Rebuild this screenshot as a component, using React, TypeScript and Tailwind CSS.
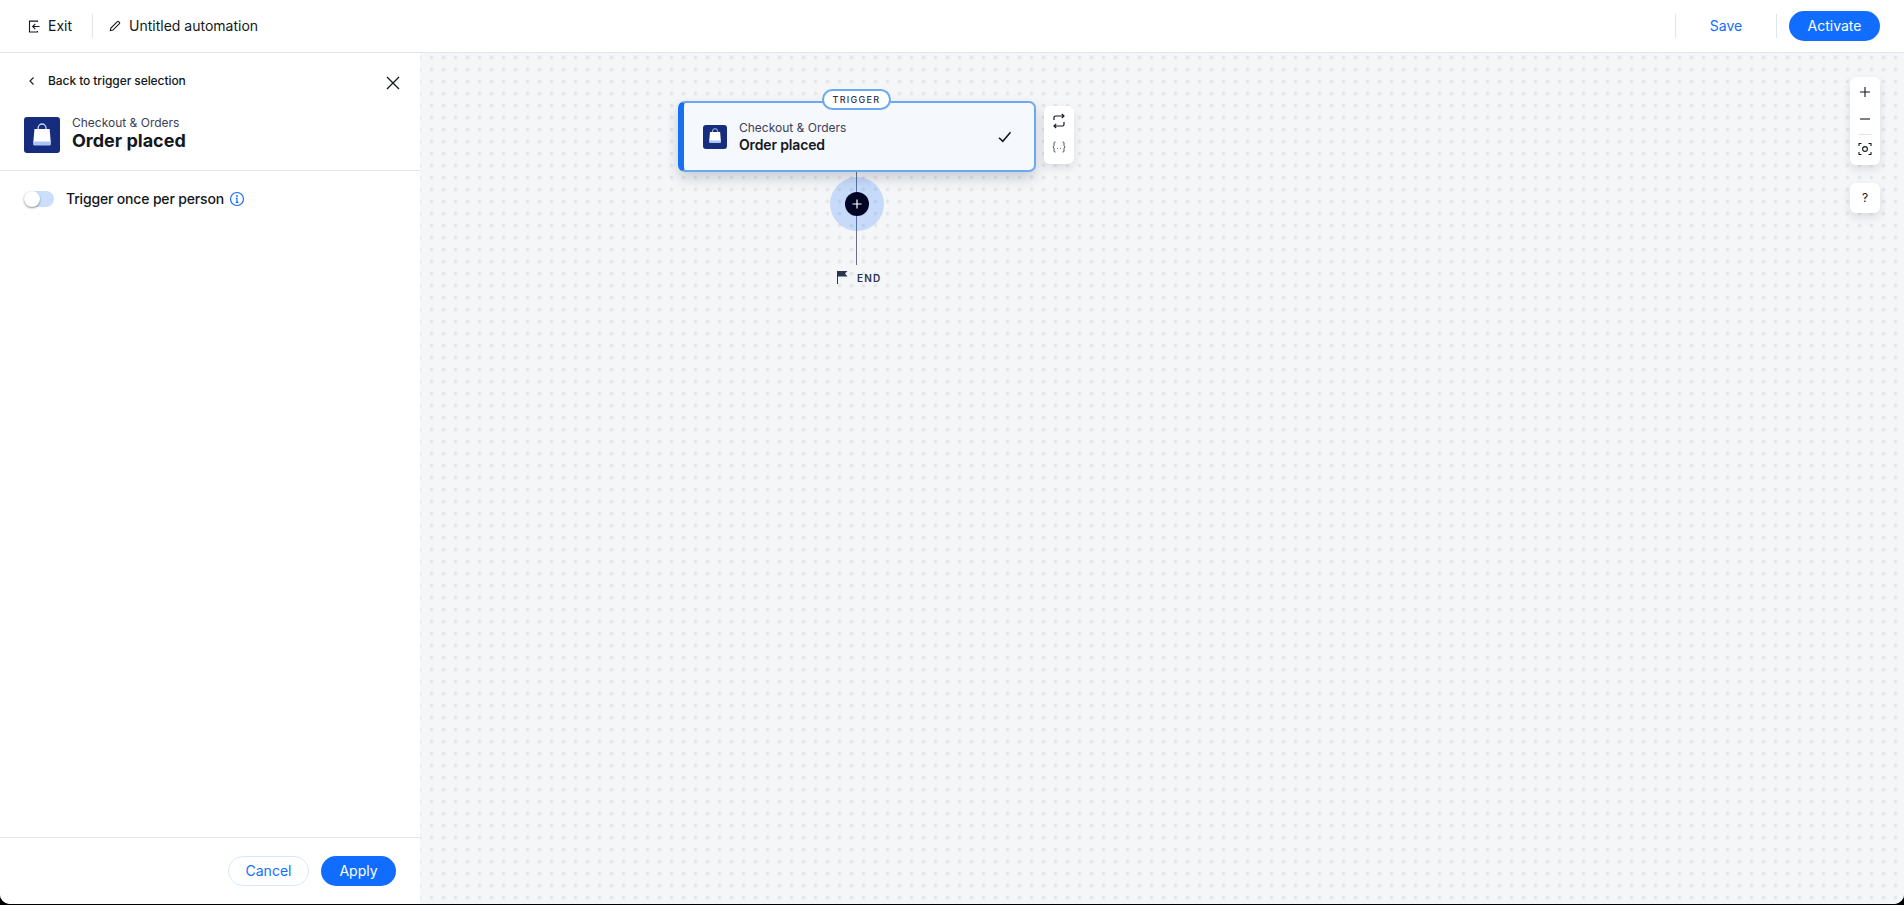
import React from "react";

const Bag = ({ size }: { size: number }) => (
  <div className="flex items-center justify-center rounded-[3px] bg-[#162d7d]" style={{ width: size, height: size }}>
    <svg width={size * 0.67} height={size * 0.67} viewBox="0 0 20 20">
      <path d="M6.800 6V4a3.200 3.200 0 0 1 6.400 0V6" fill="none" stroke="#c3d6fa" strokeWidth="1.100" />
      <path d="M3.700 5h12.600l1 11.500H2.700z" fill="#ffffff" />
      <path d="M2.800 15.400h14.400l.2 2.100a1 1 0 0 1-1 1.100H3.600a1 1 0 0 1-1-1.100z" fill="#a9c4f5" />
    </svg>
  </div>
);

const Stroke = ({ size = 18, children, className = "" }: { size?: number; children: React.ReactNode; className?: string }) => (
  <svg width={size} height={size} viewBox="0 0 18 18" fill="none" stroke="currentColor" strokeWidth="1.100" className={className}>
    {children}
  </svg>
);

function Header() {
  return (
    <header className="flex h-[53px] shrink-0 items-center border-b border-[#dfe5eb] bg-white pl-[27px] pr-6 text-[#131720]">
      <Stroke size={15}>
        <path d="M12.500 3.500V2.500H3v13h9.500v-1" strokeWidth="1.300" />
        <path d="M15 9H7M10 5.800 6.800 9l3.200 3.200" strokeWidth="1.300" />
      </Stroke>
      <span className="ml-[6px] text-[14px] leading-none">Exit</span>
      <div className="ml-[20px] h-6 w-px bg-[#dfe5eb]" />
      <Stroke size={14} className="ml-[15px]">
        <path d="M3 15l.7-3.400L12 3.300a1.200 1.200 0 0 1 1.700 0l1 1a1.200 1.200 0 0 1 0 1.700l-8.300 8.300z" strokeWidth="1.400" />
      </Stroke>
      <span className="ml-[7px] text-[14px] leading-none">Untitled automation</span>
      <div className="ml-auto h-6 w-px bg-[#dfe5eb]" />
      <button className="w-[100px] text-center text-[14px] leading-none text-[#116dff]">Save</button>
      <div className="h-6 w-px bg-[#dfe5eb]" />
      <button className="ml-3 h-[30px] w-[91px] rounded-full bg-[#116dff] text-[14px] leading-none text-white">Activate</button>
    </header>
  );
}

function Panel() {
  return (
    <aside className="flex w-[420px] shrink-0 flex-col bg-white text-[#131720]">
      <div className="h-[118px] shrink-0 border-b border-[#dfe5eb] pl-6 pr-[18px]">
        <div className="flex items-start justify-between pt-5">
          <div className="flex h-4 items-center">
            <svg width="8" height="10" viewBox="0 0 8 10" fill="none" stroke="currentColor" strokeWidth="1.100" className="ml-[4px]">
              <path d="M5.500 1.500 2 5l3.500 3.500" />
            </svg>
            <span className="ml-[12px] text-[12px] font-medium leading-4 tracking-[-0.08px]">Back to trigger selection</span>
          </div>
          <svg width="18" height="18" viewBox="0 0 18 18" stroke="currentColor" strokeWidth="1.300" className="mt-px">
            <path d="M3 3l12 12M15 3L3 15" />
          </svg>
        </div>
        <div className="mt-[23px] flex items-center gap-3">
          <Bag size={36} />
          <div className="flex flex-col pb-[3px]">
            <span className="text-[12px] leading-[15px] text-[#3b4057]">Checkout &amp; Orders</span>
            <span className="text-[18px] font-bold leading-[22px] text-[#131720]">Order placed</span>
          </div>
        </div>
      </div>
      <div className="flex items-center pl-6 pt-[18px]">
        <div className="relative h-4 w-[30px] rounded-full bg-[#cbdffc]">
          <div className="absolute left-0 top-0 h-4 w-4 rounded-full bg-white shadow-[0_1px_2px_rgba(0,0,0,0.45)]" />
        </div>
        <span className="ml-3 text-[14px] font-medium leading-5 tracking-[-0.17px]">Trigger once per person</span>
        <svg width="16" height="16" viewBox="0 0 16 16" fill="none" stroke="#116dff" className="ml-[5px]">
          <circle cx="8" cy="8" r="6.500" strokeWidth="1.200" />
          <path d="M6.800 7.300H8v4M6.800 11.300h2.600" strokeWidth="1.200" />
          <circle cx="8" cy="5" r=".9" fill="#116dff" stroke="none" />
        </svg>
      </div>
      <div className="mt-auto flex h-[67px] shrink-0 items-center justify-end gap-3 border-t border-[#dfe5eb] pr-6">
        <button className="h-[30px] w-[81px] rounded-full border border-[#d6e6fe] text-[14px] leading-none text-[#116dff]">Cancel</button>
        <button className="h-[30px] w-[75px] rounded-full bg-[#116dff] text-[14px] leading-none text-white">Apply</button>
      </div>
    </aside>
  );
}

function ToolCard({ children, className = "" }: { children: React.ReactNode; className?: string }) {
  return <div className={`rounded-[6px] bg-white shadow-[0_4px_8px_rgba(22,45,61,0.12)] ${className}`}>{children}</div>;
}

function Canvas() {
  return (
    <main className="relative flex-1 overflow-hidden bg-[#f5f6f8] bg-[radial-gradient(circle,#dfe1e6_1.300px,transparent_1.900px)] bg-[length:12px_12px] bg-[position:5.500px_-1.500px] text-[#131720]">
      {/* flow diagram nodes */}
      <div className="absolute left-[436px] top-[79px] h-[133px] w-px bg-[#6b7080]" />
      <div className="absolute left-[258px] top-[48px] flex h-[71px] w-[358px] items-center rounded-[7px] border-2 border-l-[6px] border-[#6aa9f2] border-l-[#1571ee] bg-[#f5f8fd] shadow-[0_6px_14px_rgba(22,45,61,0.2)]">
        <div className="ml-[19px]"><Bag size={24} /></div>
        <div className="ml-3 flex flex-col pb-px">
          <span className="text-[12px] leading-[16px] text-[#3b4057]">Checkout &amp; Orders</span>
          <span className="text-[14px] font-semibold leading-[17px] tracking-[-0.15px]">Order placed</span>
        </div>
        <svg width="18" height="18" viewBox="0 0 18 18" fill="none" stroke="currentColor" strokeWidth="1.500" className="ml-auto mr-[20px]">
          <path d="M3 9.800 6.800 13.300 14.500 4.300" />
        </svg>
      </div>
      <div className="absolute left-[402px] top-[36px] flex h-[21px] w-[69px] items-center justify-center rounded-full border-2 border-[#6aa9f2] bg-white text-[9px] font-medium leading-none tracking-[1.300px] text-[#2b3350]">TRIGGER</div>
      <ToolCard className="absolute left-[624px] top-[53px] flex h-[58px] w-[30px] flex-col items-center pt-[7px]">
        <svg width="14" height="16" viewBox="0 0 14 16" fill="none" stroke="currentColor" strokeWidth="1.200">
          <path d="M2 7V4.500A1.500 1.500 0 0 1 3.500 3H12M9.800.8 12 3 9.800 5.200M12 9v2.500a1.500 1.500 0 0 1-1.500 1.500H2M4.200 10.800 2 13l2.200 2.200" />
        </svg>
        <svg width="14" height="12" viewBox="0 0 14 12" fill="none" stroke="#3b4057" strokeWidth="0.900" className="mt-[12px]">
          <path d="M3.500 1H3a1 1 0 0 0-1 1v2.700L1 6l1 1.300V10a1 1 0 0 0 1 1h.5M10.500 1h.5a1 1 0 0 1 1 1v2.700L13 6l-1 1.300V10a1 1 0 0 1-1 1h-.5M5.200 7.500h.8M8 7.500h.8" />
        </svg>
      </ToolCard>
      <div className="absolute left-[410px] top-[124px] flex h-[54px] w-[54px] items-center justify-center rounded-full bg-[#116dff]/20">
        <div className="flex h-6 w-6 items-center justify-center rounded-full bg-[#000624] text-white">
          <svg width="12" height="12" viewBox="0 0 12 12" stroke="currentColor" strokeWidth="1.200"><path d="M6 1.500v9M1.500 6h9" /></svg>
        </div>
      </div>
      <div className="absolute left-[417px] top-[218px] flex items-center gap-[9px]">
        <svg width="11" height="13" viewBox="0 0 11 13" fill="#2b3350"><path d="M0 0h10.500L8 2.500l2.500 3H1V13H0z" /></svg>
        <span className="text-[10px] font-semibold leading-none tracking-[1.200px] text-[#2b3350]">END</span>
      </div>
      {/* zoom controls */}
      <ToolCard className="absolute right-[24px] top-[24px] flex h-[88px] w-[30px] flex-col items-center">
        <svg width="12" height="12" viewBox="0 0 12 12" stroke="currentColor" strokeWidth="1.100" className="mt-[9px]"><path d="M6 1v10M1 6h10" /></svg>
        <svg width="12" height="12" viewBox="0 0 12 12" stroke="currentColor" strokeWidth="1.100" className="mt-[15px]"><path d="M1 6h10" /></svg>
        <div className="mt-[9px] h-px w-[14px] bg-[#dfe5eb]" />
        <svg width="14" height="14" viewBox="0 0 14 14" fill="none" stroke="currentColor" strokeWidth="1.100" className="mt-[7px]">
          <path d="M1 4V1.500h2.500M10.500 1.500H13V4M13 10v2.500h-2.500M3.500 12.500H1V10" />
          <circle cx="7" cy="7" r="2.400" />
        </svg>
      </ToolCard>
      <ToolCard className="absolute right-[24px] top-[130px] flex h-[30px] w-[30px] items-center justify-center">
        <span className="text-[12px] leading-none">?</span>
      </ToolCard>
    </main>
  );
}

export default function App() {
  return (
    <div className="h-[905px] overflow-hidden bg-black">
      <div className="flex h-[904px] flex-col overflow-hidden rounded-b-[10px] bg-white [font-family:Inter,'Noto_Sans',sans-serif]">
        <Header />
        <div className="flex min-h-0 flex-1">
          <Panel />
          <Canvas />
        </div>
      </div>
    </div>
  );
}
